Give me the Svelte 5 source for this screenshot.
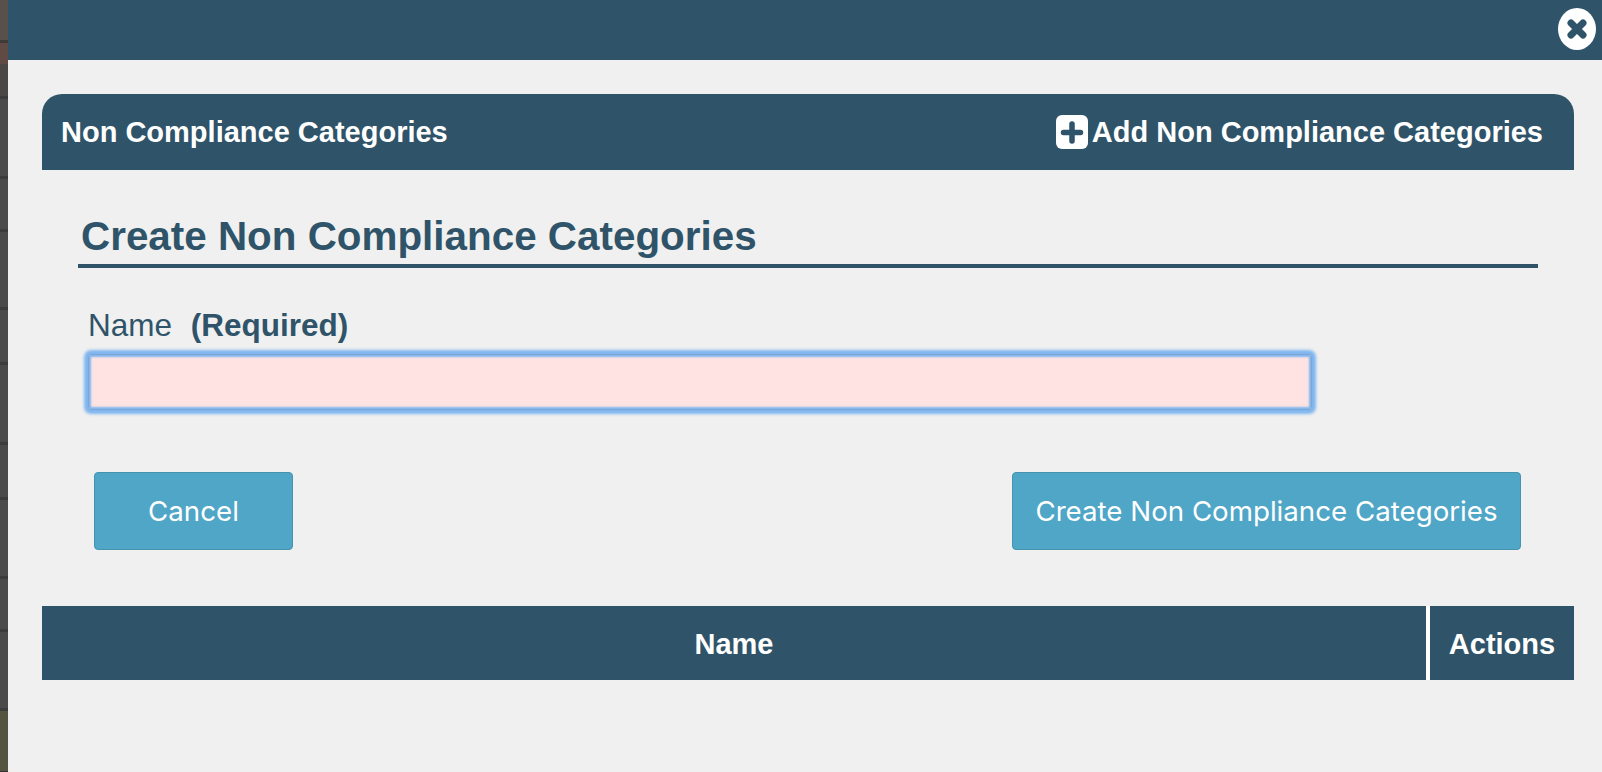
<script>
  // slices of the page showing behind the modal, top to bottom
  const rows = [32, 77, 50, 75, 52, 77, 52, 76, 50, 76];
  const backdrop = [
    { h: 40, c: '#58504a' }, { h: 3, c: '#3f3a38' },
    { h: 21, c: '#5f4a44' }, { h: rows[0], c: '#4a4846' }, { h: 3, c: '#3c3c3c' }
  ];
  for (const h of rows.slice(1)) {
    backdrop.push({ h, c: '#4a4a4a' }, { h: 3, c: '#3c3c3c' });
  }
  backdrop.push({ h: 60, c: '#55553f' }, { h: 4, c: '#333' });
</script>

<div class="page">
  <div class="backdrop">
    {#each backdrop as s}
      <div style="height: {s.h}px; background: {s.c}"></div>
    {/each}
  </div>

  <div class="modal">
    <div class="modal-top">
      <button class="close" aria-label="Close">
        <svg viewBox="0 0 38 42" width="38" height="42">
          <ellipse cx="19" cy="21" rx="19" ry="21" fill="#fff" />
          <path d="M13 15 L25 27 M25 15 L13 27" stroke="#2f5469" stroke-width="7" stroke-linecap="round" />
        </svg>
      </button>
    </div>

    <div class="content">
      <div class="panel-head">
        <span>Non Compliance Categories</span>
        <span class="add">
          <svg viewBox="0 0 32 34" width="32" height="34">
            <rect width="32" height="34" rx="6" fill="#fff" />
            <path d="M16 9 V26 M7.500 17.500 H24.500" stroke="#2f5469" stroke-width="5.500" stroke-linecap="round" />
          </svg>
          Add Non Compliance Categories
        </span>
      </div>

      <form class="form">
        <h2>Create Non Compliance Categories</h2>
        <div class="field">
          <label for="name">Name <strong>(Required)</strong></label>
          <input id="name" type="text" />
        </div>
        <div class="buttons">
          <button type="button" class="btn cancel">Cancel</button>
          <button type="button" class="btn create">Create Non Compliance Categories</button>
        </div>
      </form>

      <table>
        <thead>
          <tr>
            <th>Name</th>
            <th class="actions">Actions</th>
          </tr>
        </thead>
      </table>
    </div>
  </div>
</div>

<style>
  :global(body) {
    margin: 0;
    background: #f0f0f0;
  }

  .page {
    display: flex;
    height: 772px;
    overflow: hidden;
    font-family: "Liberation Sans", Arial, sans-serif;
    color: #2f5469;
  }

  .backdrop {
    width: 8px;
    flex-shrink: 0;
  }

  .modal {
    flex: 1;
    background: #f0f0f0;
  }

  .modal-top {
    height: 60px;
    background: #2f5469;
    display: flex;
    justify-content: flex-end;
    align-items: flex-start;
    padding: 8px 6px 0 0;
    box-sizing: border-box;
  }

  .close {
    border: 0;
    background: none;
    padding: 0;
    display: block;
    line-height: 0;
  }

  .content {
    padding: 34px 28px 0 34px;
  }

  .panel-head {
    height: 76px;
    background: #2f5469;
    color: #fff;
    border-radius: 20px 20px 0 0;
    display: flex;
    align-items: center;
    justify-content: space-between;
    padding: 0 31px 0 19px;
    font-size: 29px;
    font-weight: bold;
  }

  .add {
    display: flex;
    align-items: center;
    gap: 4px;
  }

  .form {
    padding: 0 36px;
  }

  h2 {
    margin: 46px 0 0;
    padding: 0 0 8px 3px;
    border-bottom: 4px solid #2f5469;
    font-size: 40.400px;
    line-height: 40px;
    font-weight: bold;
  }

  .field {
    padding: 0 0 0 10px;
    margin-top: 37px;
  }

  label {
    display: block;
    font-size: 31.500px;
    line-height: 40px;
  }

  label strong {
    margin-left: 10px;
  }

  input {
    display: block;
    width: 1224px;
    height: 56px;
    box-sizing: border-box;
    margin-top: 9px;
    background: #fee3e2;
    border: 1px solid #7fa6d0;
    border-radius: 3px;
    box-shadow: 0 0 3px 4px #7fb6f0, inset 0 0 2px 2px #7fb6f0;
    outline: none;
  }

  .buttons {
    display: flex;
    justify-content: space-between;
    padding: 0 17px 0 16px;
    margin-top: 62px;
  }

  .btn {
    height: 78px;
    box-sizing: border-box;
    background: #4fa6c7;
    color: #fff;
    border: 1px solid #4593ae;
    border-radius: 4px;
    font-family: Inter, sans-serif;
    font-size: 27.700px;
  }

  .cancel {
    width: 199px;
  }

  .create {
    width: 509px;
  }

  table {
    width: 100%;
    margin-top: 56px;
    border-collapse: collapse;
    table-layout: fixed;
  }

  th {
    height: 74px;
    padding: 2px 0 0;
    box-sizing: border-box;
    background: #2f5469;
    color: #fff;
    font-size: 29px;
    font-weight: bold;
    text-align: center;
  }

  .actions {
    width: 146px;
    border-left: 4px solid #fff;
  }
</style>
